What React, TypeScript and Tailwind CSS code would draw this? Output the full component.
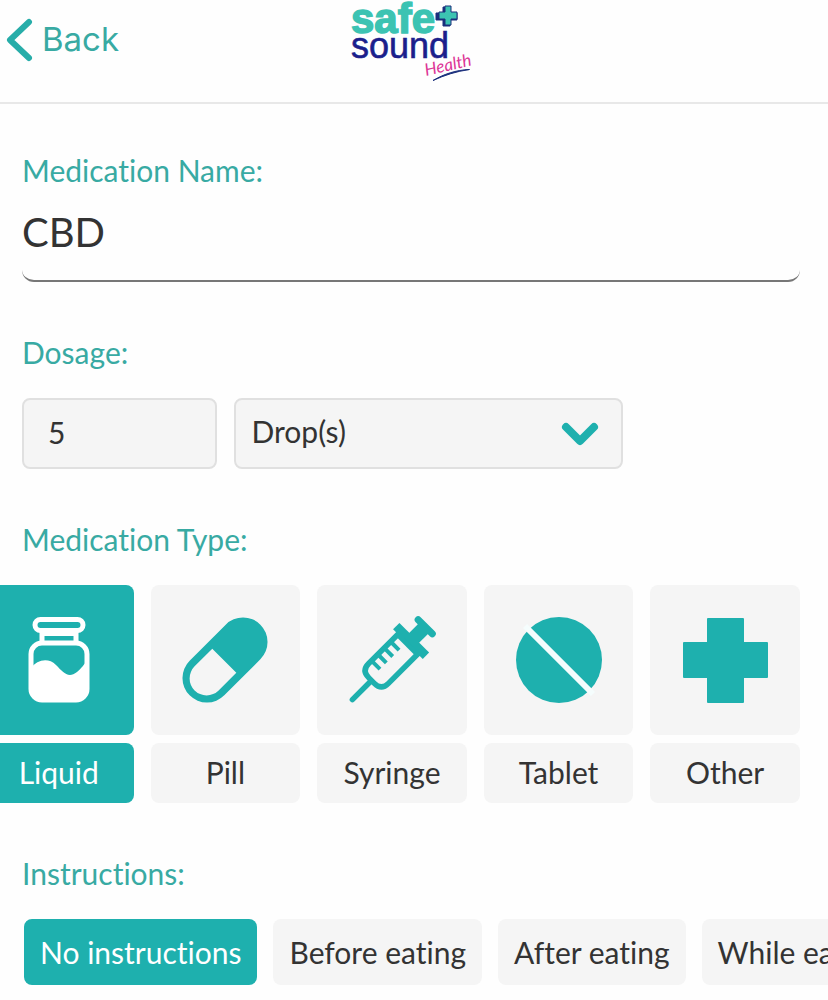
import React, { useState } from 'react';
import clsx from 'clsx';

const Logo = () => (
  <svg width="128" height="84" viewBox="0 0 128 84" className="overflow-visible" role="img" aria-label="Safe + Sound Health">
    <text x="1" y="33" fontFamily="Liberation Sans, sans-serif" fontSize="42" fontWeight="700" fill="#3cc3b2" stroke="#3cc3b2" strokeWidth="1.5">
      safe
    </text>
    <text x="1" y="58" fontFamily="Liberation Sans, sans-serif" fontSize="36" fill="#1b1f8c" stroke="#1b1f8c" strokeWidth="0.6">
      sound
    </text>
    <path d="M93 7h7v6h7v7h-7v6h-7v-6h-7v-7h7z" fill="#1b2f7c" stroke="#1b2f7c" strokeWidth="1" />
    <path d="M95 6h6v6h6v7h-6v6h-6v-6h-6v-7h6z" fill="#3cc3b2" stroke="#1b2f7c" strokeWidth="1" />
    <text x="76" y="76" transform="rotate(-13 76 76)" fontFamily="Lato, sans-serif" fontSize="17" fontStyle="italic" fill="#dc3596">
      Health
    </text>
    <path d="M83 80.500C94 74 106 70 119.500 69.500C106 71.500 95 75 83 80.500z" fill="#1b2f7c" stroke="#1b2f7c" strokeWidth="1" />
  </svg>
);

const LiquidIcon = () => (
  <svg width="86" height="86" viewBox="0 0 86 86" fill="none" stroke="currentColor" strokeWidth="5">
    <rect x="19" y="2.500" width="48" height="11" rx="5.500" />
    <path d="M26 14v11M60 14v11M26 16.500h34" />
    <rect x="15" y="26" width="56" height="57" rx="11" />
    <path d="M15 51C21 43 32 40 40 48C47 55 52 62 61 55C66 51 68 47 71 44V72q0 11-11 11H26q-11 0-11-11z" fill="currentColor" stroke="none" />
  </svg>
);

const PillIcon = () => (
  <svg width="86" height="86" viewBox="0 0 86 86">
    <g transform="rotate(45 43 43)">
      <rect x="18.500" y="-7" width="49" height="100" rx="24.500" fill="currentColor" />
      <path d="M26 44h34v25a17 17 0 0 1-34 0z" fill="#f5f5f5" />
    </g>
  </svg>
);

const SyringeIcon = () => (
  <svg width="86" height="86" viewBox="0 0 86 86" className="overflow-visible">
    <g transform="translate(43 43) rotate(45)" fill="none" stroke="currentColor" strokeWidth="5.500">
      <path d="M-10-47H10" strokeWidth="7" strokeLinecap="round" />
      <path d="M0-46V-26" strokeWidth="14" />
      <path d="M-21-27H21" strokeWidth="9" />
      <path d="M-14-26V19q0 10 10 10h8q10 0 10-10V-26" />
      <path d="M-13-22H13" strokeWidth="5" />
      <path d="M-12-12H-2M-12-3H-2M-12 6H-2M-12 15H-2" strokeWidth="4" />
      <path d="M0 30V56" strokeLinecap="round" />
    </g>
  </svg>
);

const TabletIcon = () => (
  <svg width="86" height="86" viewBox="0 0 86 86">
    <circle cx="43" cy="43" r="43" fill="currentColor" />
    <path d="M9 9L77 77" stroke="#f5fdfd" strokeWidth="6" />
  </svg>
);

const OtherIcon = () => (
  <svg width="86" height="86" viewBox="0 0 86 86">
    <path d="M26 1h35q1 0 1 1v23h23q1 0 1 1v34q0 1-1 1H62v24q0 1-1 1H26q-1 0-1-1V61H2q-1 0-1-1V26q0-1 1-1h23V2q0-1 1-1z" fill="currentColor" />
  </svg>
);

const TYPES = [
  { name: 'Liquid', icon: LiquidIcon },
  { name: 'Pill', icon: PillIcon },
  { name: 'Syringe', icon: SyringeIcon },
  { name: 'Tablet', icon: TabletIcon },
  { name: 'Other', icon: OtherIcon },
];

const INSTRUCTIONS = ['No instructions', 'Before eating', 'After eating', 'While eating'];

const labelClass = 'block text-[30px] leading-9 text-[#38aaa3]';

const App: React.FC = () => {
  const [name, setName] = useState('CBD');
  const [amount, setAmount] = useState('5');
  const [unit, setUnit] = useState('Drop(s)');
  const [type, setType] = useState('Liquid');
  const [instruction, setInstruction] = useState('No instructions');

  return (
    <div className="min-h-screen overflow-hidden bg-[#fefefe] font-['Lato',sans-serif] text-[#333333] [font-variant-ligatures:none]">
      <header className="grid h-[104px] grid-cols-[1fr_auto_1fr] items-start border-b-2 border-[#e8e8e8]">
        <button type="button" className="flex h-20 items-center gap-2 justify-self-start pl-1.5 font-['Inter',sans-serif] text-[33px] text-[#38aaa3]">
          <svg width="28" height="44" viewBox="0 0 28 44" fill="none" stroke="#27ada9" strokeWidth="6" strokeLinecap="round" strokeLinejoin="round">
            <path d="M23 4L4 22L23 40" />
          </svg>
          Back
        </button>
        <Logo />
      </header>

      <main className="pt-12 pr-7 pl-[22px]">
        <section>
          <label htmlFor="name" className={labelClass}>Medication Name:</label>
          <input
            id="name"
            value={name}
            onChange={(e) => setName(e.target.value)}
            className="mt-4 block h-[78px] w-full rounded-xl border-b-2 border-[#777777] bg-transparent pb-5 text-[40px] outline-none"
          />
        </section>

        <section className="mt-[52px]">
          <label htmlFor="amount" className={labelClass}>Dosage:</label>
          <div className="mt-7 flex gap-[17px] text-[30px]">
            <input
              id="amount"
              value={amount}
              onChange={(e) => setAmount(e.target.value)}
              className="h-[71px] w-1/4 rounded-lg border-2 border-[#e0e0e0] bg-[#f5f5f5] px-6 pb-1 outline-none"
            />
            <div className="relative w-1/2">
              <select
                aria-label="Dosage unit"
                value={unit}
                onChange={(e) => setUnit(e.target.value)}
                className="h-[71px] w-full appearance-none rounded-lg border-2 border-[#e0e0e0] bg-[#f5f5f5] px-4 pb-1 outline-none"
              >
                <option>Drop(s)</option>
                <option>ml</option>
              </select>
              <svg className="pointer-events-none absolute top-6 right-6" width="38" height="24" viewBox="0 0 38 24" fill="none" stroke="#1eb0ae" strokeWidth="8" strokeLinecap="round" strokeLinejoin="round">
                <path d="M5 5L19 19L33 5" />
              </svg>
            </div>
          </div>
        </section>

        <section className="mt-[52px]">
          <h2 className={labelClass}>Medication Type:</h2>
          <div className="mt-7 -ml-[38px] grid grid-cols-5 gap-[17px]">
            {TYPES.map(({ name: typeName, icon: Icon }) => {
              const active = type === typeName;
              return (
                <button key={typeName} type="button" aria-pressed={active} onClick={() => setType(typeName)} className="flex flex-col gap-2 text-[30px]">
                  <span className={clsx('flex h-[150px] w-full items-center justify-center rounded-lg', active ? 'bg-[#1eb0ae] text-white' : 'bg-[#f5f5f5] text-[#1eb0ae]')}>
                    <Icon />
                  </span>
                  <span className={clsx('flex h-[60px] w-full items-center justify-center rounded-lg pb-0.5', active ? 'bg-[#1eb0ae] text-white' : 'bg-[#f5f5f5]')}>
                    {typeName}
                  </span>
                </button>
              );
            })}
          </div>
        </section>

        <section className="mt-[52px]">
          <h2 className={labelClass}>Instructions:</h2>
          <div className="mt-7 -mr-7 flex gap-4 overflow-hidden pl-0.5 text-[30px]">
            {INSTRUCTIONS.map((item) => (
              <button
                key={item}
                type="button"
                aria-pressed={instruction === item}
                onClick={() => setInstruction(item)}
                className={clsx('h-[66px] shrink-0 rounded-lg px-4 whitespace-nowrap', instruction === item ? 'bg-[#1eb0ae] text-white' : 'bg-[#f5f5f5]')}
              >
                {item}
              </button>
            ))}
          </div>
        </section>
      </main>
    </div>
  );
};

export default App;
